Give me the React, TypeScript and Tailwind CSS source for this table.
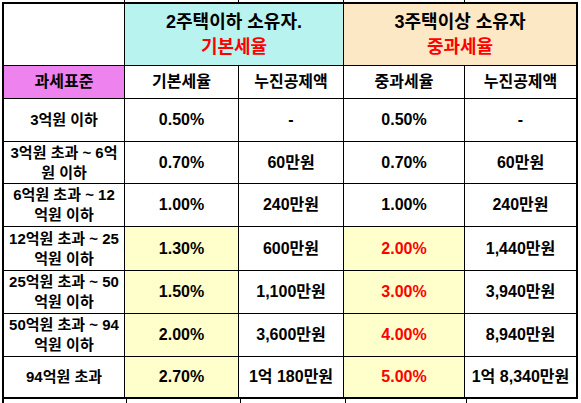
import React from "react";

type Row = {
  label: string[];
  base: string;
  baseDeduct: string;
  heavy: string;
  heavyDeduct: string;
  highlight?: boolean;
};

const rows: Row[] = [
  { label: ["3억원 이하"], base: "0.50%", baseDeduct: "-", heavy: "0.50%", heavyDeduct: "-" },
  { label: ["3억원 초과 ~ 6억", "원 이하"], base: "0.70%", baseDeduct: "60만원", heavy: "0.70%", heavyDeduct: "60만원" },
  { label: ["6억원 초과 ~ 12", "억원 이하"], base: "1.00%", baseDeduct: "240만원", heavy: "1.00%", heavyDeduct: "240만원" },
  { label: ["12억원 초과 ~ 25", "억원 이하"], base: "1.30%", baseDeduct: "600만원", heavy: "2.00%", heavyDeduct: "1,440만원", highlight: true },
  { label: ["25억원 초과 ~ 50", "억원 이하"], base: "1.50%", baseDeduct: "1,100만원", heavy: "3.00%", heavyDeduct: "3,940만원", highlight: true },
  { label: ["50억원 초과 ~ 94", "억원 이하"], base: "2.00%", baseDeduct: "3,600만원", heavy: "4.00%", heavyDeduct: "8,940만원", highlight: true },
  { label: ["94억원 초과"], base: "2.70%", baseDeduct: "1억 180만원", heavy: "5.00%", heavyDeduct: "1억 8,340만원", highlight: true },
];

const cell = "flex items-center justify-center text-center";

const Stubs = () => (
  <div className="grid w-fit grid-cols-[120px_113px_104px_120px_111px] gap-x-px bg-black h-full">
    <div className="bg-white" />
    <div className="bg-white" />
    <div className="bg-white" />
    <div className="bg-white" />
    <div className="bg-white" />
  </div>
);

export default function App() {
  return (
    <div
      className="w-[581px] h-[403px] bg-white text-black font-bold overflow-hidden"
      style={{ fontFamily: '"Liberation Sans", "Noto Sans CJK KR", sans-serif' }}
    >
      {/* cut-off lines above */}
      <div className="ml-[4px] h-[2px]">
        <Stubs />
      </div>

      <div className="ml-[2px] w-fit border-2 border-black">
        <div className="grid grid-cols-[120px_113px_104px_120px_111px] grid-rows-[61px_32px_42px_41px_42px_43px_42px_42px_40px] gap-px bg-black">
          {/* header */}
          <div className="bg-white" />
          <div className={`${cell} col-span-2 flex-col bg-[#b8f3ef] text-[18px] leading-[25px]`}>
            <span>2주택이하 소유자.</span>
            <span className="text-[#ff0000]">기본세율</span>
          </div>
          <div className={`${cell} col-span-2 flex-col bg-[#fde8c6] text-[18px] leading-[25px]`}>
            <span>3주택이상 소유자</span>
            <span className="text-[#ff0000]">중과세율</span>
          </div>

          <div className={`${cell} bg-[#ee82ee] text-[16px]`}>과세표준</div>
          <div className={`${cell} bg-white text-[16px]`}>기본세율</div>
          <div className={`${cell} bg-white text-[16px]`}>누진공제액</div>
          <div className={`${cell} bg-white text-[16px]`}>중과세율</div>
          <div className={`${cell} bg-white text-[16px]`}>누진공제액</div>

          {rows.map((r, i) => (
            <React.Fragment key={i}>
              <div className={`${cell} flex-col bg-white text-[15px] leading-[20px]`}>
                {r.label.map((l, j) => (
                  <span key={j} className="whitespace-nowrap">{l}</span>
                ))}
              </div>
              <div className={`${cell} text-[16px] ${r.highlight ? "bg-[#ffffcc]" : "bg-white"}`}>{r.base}</div>
              <div className={`${cell} bg-white text-[16px] whitespace-nowrap`}>{r.baseDeduct}</div>
              <div
                className={`${cell} text-[16px] ${r.highlight ? "bg-[#ffffcc] text-[#ff0000]" : "bg-white"}`}
              >
                {r.heavy}
              </div>
              <div className={`${cell} bg-white text-[16px] whitespace-nowrap`}>{r.heavyDeduct}</div>
            </React.Fragment>
          ))}
        </div>
      </div>

      {/* cut-off lines below */}
      <div className="ml-[2px] h-[4px] w-fit border-l-2 border-black pl-[2px]">
        <Stubs />
      </div>
    </div>
  );
}
